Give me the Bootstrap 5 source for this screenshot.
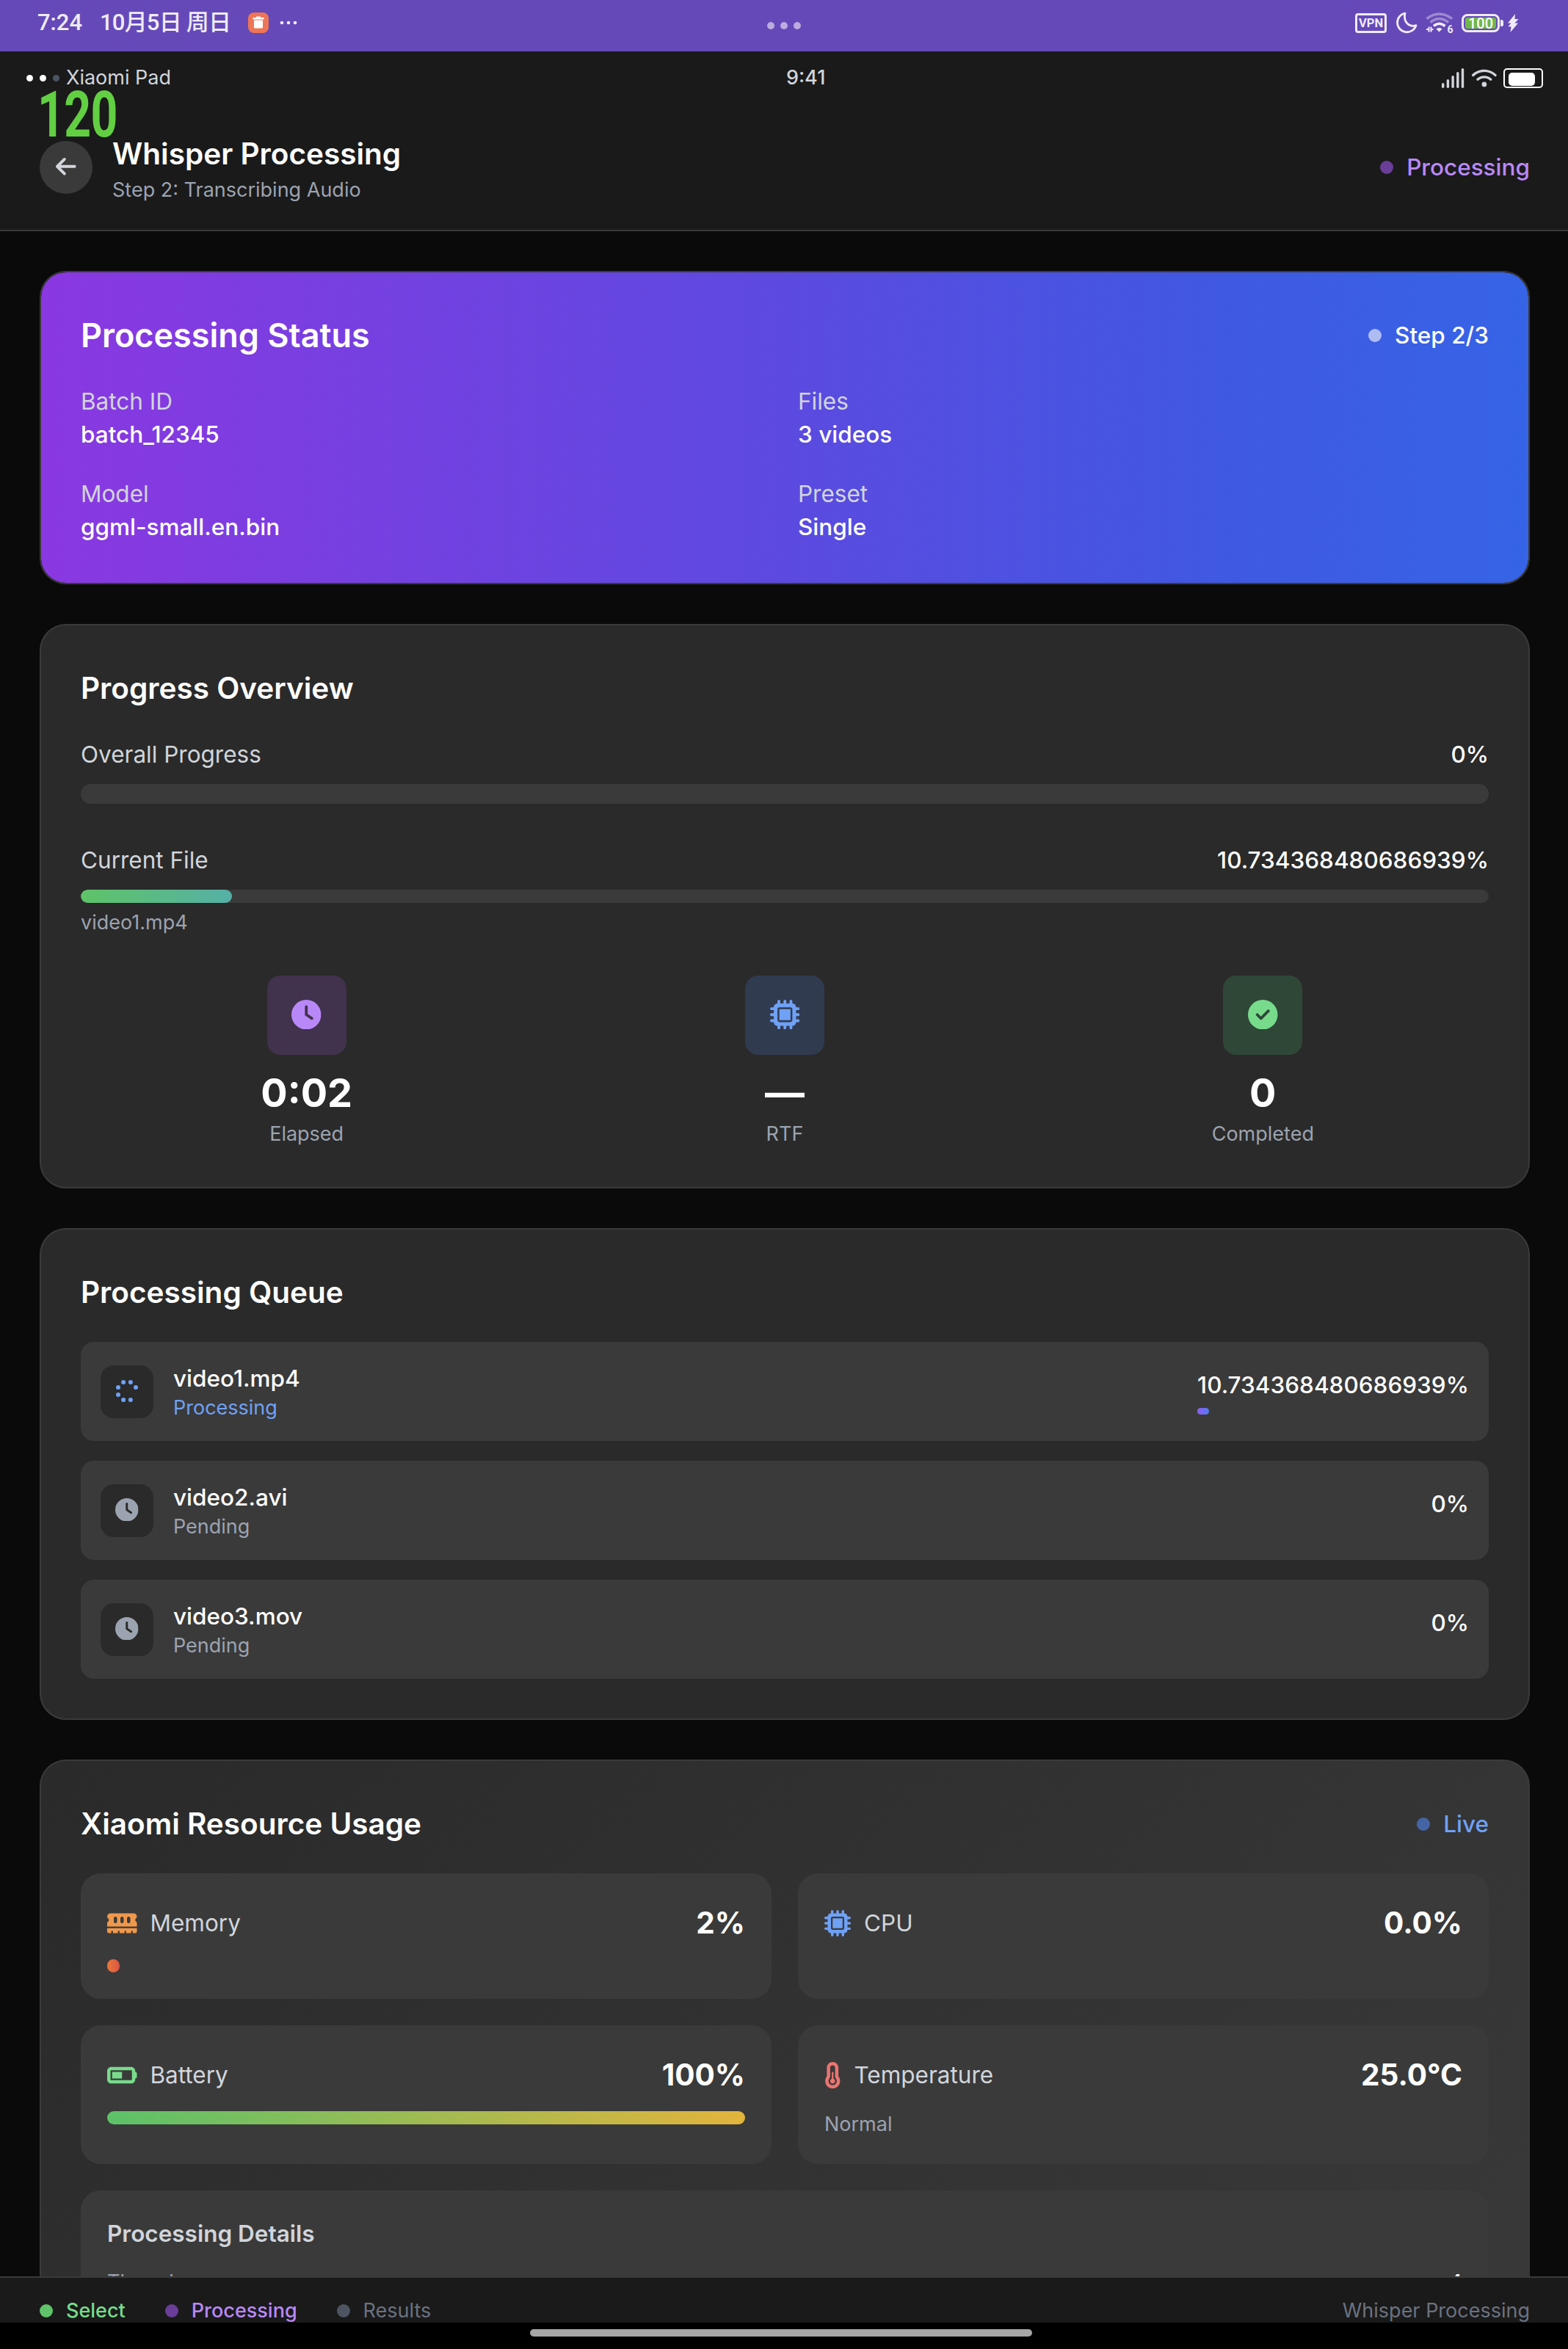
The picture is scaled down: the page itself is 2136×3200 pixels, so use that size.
<!DOCTYPE html>
<html lang="en" data-bs-theme="dark">
<head>
<meta charset="utf-8">
<meta name="viewport" content="width=device-width, initial-scale=1">
<title>Whisper Processing</title>
<link href="https://cdn.jsdelivr.net/npm/bootstrap@5.3.0/dist/css/bootstrap.min.css" rel="stylesheet">
<style>
:root{--ink:#fff;--soft:#d1d5db;--muted:#9ca3b0;--dim:#6b7280;--line:#3a3a3a;--panel:#2a2a2a;--purple:#b988f8;--blue:#6fa1f5;--green:#78db8c}
body{background:#0a0a0a;color:var(--ink);font-family:Inter,"Noto Sans CJK SC",sans-serif;font-size:31.5px;line-height:45px}
.screen{width:2136px;height:3200px;overflow:hidden}
.t-sm{font-size:27px;line-height:36px}
.t-lg{font-size:40.5px;line-height:63px}
.t-xl{font-size:45px;line-height:63px}
.t-2xl{font-size:54px;line-height:72px}
.w-500{font-weight:500}
.c-soft{color:var(--soft)}.c-muted{color:var(--muted)}.c-dim{color:var(--dim)}
.c-purple{color:var(--purple)}.c-blue{color:var(--blue)}.c-green{color:var(--green)}
.gap-9{gap:9px}.gap-18{gap:18px}.gap-36{gap:36px}.gap-54{gap:54px}
.head-gap{margin-bottom:36px}
.dot{width:18px;height:18px;border-radius:50%;flex:none}
svg{display:block;fill:currentColor;flex:none}
/* system bar */
.sysbar{height:70px;background:#6549b8;color:#efebf8;padding:0 66px 8px 51px;font-family:Roboto,"Noto Sans CJK SC",sans-serif;font-size:31px;line-height:40px}
.sys-date{margin-left:24px;letter-spacing:-.8px}
.sys-app{margin-left:24px}
.sys-dots{left:1045px;top:30px;gap:8px}
.sys-dots i{width:10px;height:10px;border-radius:50%;background:#bbacdf}
.vpn{width:43px;height:27px;border:3px solid #efebf8;border-radius:4px;font:700 16.500px/22px Roboto,sans-serif;text-align:center;display:flex;justify-content:center}
.sys-batt{width:52px;height:25px;border:3px solid #efebf8;border-radius:8px;padding:2px}
.sys-batt span{display:block;height:15px;border-radius:3px;background:#70b749;color:#fff;font:500 20px/16px Roboto,sans-serif;text-align:center}
/* application header */
.app-head{background:#1a1a1a;height:245px;border-bottom:2px solid var(--line)}
.app-status{height:72px;padding:0 34px 0 36px}
.mini{width:9px;height:9px;border-radius:50%;background:#fff}
.mini.off{background:#4b5563}
.batt{width:54px;height:27px;border:2px solid #fff;border-radius:5px;padding:4px 0 0 5px;margin-top:1px}
.batt i{display:block;width:36px;height:18px;border-radius:5px;background:#fff}
.app-title{padding:36px 52px 36px 54px}
.back{width:72px;height:72px;border-radius:50%;background:var(--line);color:var(--soft)}
/* frame-rate counter */
.fps{left:51px;top:125px;z-index:5;color:#62cf42;font:700 87px/62px Roboto,sans-serif;letter-spacing:-1px;transform:scaleX(.74);transform-origin:0 0}
/* panels */
main{flex:1 1 0;min-height:0;overflow:hidden;padding:54px 52px 0 54px}
.panel{border:2px solid var(--line);border-radius:36px;background:var(--panel);padding:54px;flex:none}
.panel-status{background:linear-gradient(90deg,#8a38e1,#5c4ae0 50%,#4058e2 79%,#3664e6);background-clip:padding-box}
.panel-res{background:linear-gradient(135deg,#2a2a2a,#3a3a3a);height:980px}
.two{display:grid;grid-template-columns:1fr 1fr;gap:36px}
.three{display:grid;grid-template-columns:1fr 1fr 1fr;gap:36px;margin-top:54px}
.track{background:var(--line);border-radius:14px;overflow:hidden}
.track i,.fill{display:block;border-radius:9px;height:100%}
.tile{width:108px;height:108px;border-radius:18px;padding-bottom:2px}
.stat-num{margin:16px 0 2px}
.job{background:var(--line);border-radius:18px;padding:27px;height:135px}
.job-ico{width:72px;height:72px;border-radius:18px;background:var(--panel);padding-bottom:2px}
.job-name{margin-left:27px}
.job-pct{margin-top:9px;height:9px}
.meter{background:var(--line);border-radius:27px;padding:36px}
.meter-bar{height:18px;margin-top:18px}
.details{background:var(--line);border-radius:27px;padding:36px;margin-top:36px;height:420px}
/* step footer */
.steps{height:63px;background:#1a1a1a;border-top:2px solid var(--line);padding:27px 52px 0 54px;overflow:hidden}
.home{height:36px;background:#000;padding:9px 0 0 722px}
.home i{display:block;width:684px;height:10px;border-radius:5px;background:#a6a6a6}
</style>
</head>
<body>
<svg width="0" height="0" class="position-absolute">
<symbol id="clock" viewBox="0 0 512 512"><path d="M256 0a256 256 0 1 1 0 512A256 256 0 1 1 256 0zM232 120V256c0 8 4 15.500 10.700 20l96 64c11 7.400 25.900 4.400 33.300-6.700s4.400-25.900-6.700-33.300L280 243.200V120c0-13.300-10.700-24-24-24s-24 10.700-24 24z"/></symbol>
<symbol id="chip" viewBox="0 0 512 512"><path d="M176 24c0-13.300-10.700-24-24-24s-24 10.700-24 24V64c-35.300 0-64 28.700-64 64H24c-13.300 0-24 10.700-24 24s10.700 24 24 24H64v56H24c-13.300 0-24 10.700-24 24s10.700 24 24 24H64v56H24c-13.300 0-24 10.700-24 24s10.700 24 24 24H64c0 35.300 28.700 64 64 64v40c0 13.300 10.700 24 24 24s24-10.700 24-24V448h56v40c0 13.300 10.700 24 24 24s24-10.700 24-24V448h56v40c0 13.300 10.700 24 24 24s24-10.700 24-24V448c35.300 0 64-28.700 64-64h40c13.300 0 24-10.700 24-24s-10.700-24-24-24H448V280h40c13.300 0 24-10.700 24-24s-10.700-24-24-24H448V176h40c13.300 0 24-10.700 24-24s-10.700-24-24-24H448c0-35.300-28.700-64-64-64V24c0-13.300-10.700-24-24-24s-24 10.700-24 24V64H280V24c0-13.300-10.700-24-24-24s-24 10.700-24 24V64H176V24zM160 128H352c17.700 0 32 14.300 32 32V352c0 17.700-14.300 32-32 32H160c-17.700 0-32-14.300-32-32V160c0-17.700 14.300-32 32-32zm192 32H160V352H352V160z"/></symbol>
</svg>
<div class="screen d-flex flex-column position-relative">

<div class="sysbar d-flex align-items-center position-relative">
  <span class="w-500">7:24</span>
  <span class="sys-date w-500">10月5日 周日</span>
  <svg class="sys-app" width="28" height="28" viewBox="0 0 28 28"><rect width="28" height="28" rx="8" fill="#ee7656"/><path fill="#fff" d="M11 5.500h6v1.500h4.500v2.500H6.500V7h4.500zM8 10.500h12V20q0 1.500-1.500 1.500h-9Q8 21.500 8 20z"/></svg>
  <svg width="24" height="6" viewBox="0 0 24 6" style="margin-left:15px"><circle cx="3" cy="3" r="2.300"/><circle cx="12" cy="3" r="2.300"/><circle cx="21" cy="3" r="2.300"/></svg>
  <div class="sys-dots position-absolute d-flex"><i></i><i></i><i></i></div>
  <div class="ms-auto d-flex align-items-center">
    <div class="vpn">VPN</div>
    <svg style="margin-left:12px" width="30" height="30" viewBox="0 0 30 30"><path d="M13 2A13 13 0 1 0 28 18.500Q21 21 16 16T13 2z" fill="none" stroke="currentColor" stroke-width="2.800" stroke-linejoin="round"/></svg>
    <svg style="margin-left:11px" width="39" height="30" viewBox="0 0 39 30"><g fill="none" stroke="currentColor" stroke-width="3.600"><path opacity=".4" d="M1.500 9.500Q18.500-3.500 36 9.500"/><path opacity=".4" d="M6.500 14.500Q18.500 4.500 31 14.500"/><path d="M11 19.500Q18.500 13 26.500 19.500"/></g><path d="M14.500 23.500Q18.500 20 22.500 23.500L18.500 27.500z"/><path d="M1 24h2.500M4.500 20.500v7M7.500 20.500v7M8.500 24h2" fill="none" stroke="currentColor" stroke-width="2"/><text x="29.500" y="28.500" font-size="14" font-weight="700" font-family="Roboto,sans-serif">6</text></svg>
    <div class="sys-batt" style="margin-left:10px"><span>100</span></div>
    <svg width="5" height="9" viewBox="0 0 5 9"><path d="M1 0h1.500Q5 0 5 2.500v4Q5 9 2.500 9H1z"/></svg>
    <svg style="margin-left:5px" width="17" height="25" viewBox="0 0 17 25"><path d="M11 0L1 12.500h4.500L1.500 17l4 .5L4.500 25 15 12.500h-4.500L15.500 7h-5z"/></svg>
  </div>
</div>

<div class="fps position-absolute">120</div>

<header class="app-head">
  <div class="app-status d-flex align-items-center justify-content-between t-sm c-soft">
    <div class="d-flex align-items-center gap-9"><span class="mini"></span><span class="mini"></span><span class="mini off"></span><span>Xiaomi Pad</span></div>
    <div class="w-500">9:41</div>
    <div class="d-flex align-items-center gap-9">
      <svg width="34" height="27" viewBox="0 0 34 27"><rect x="2" y="20" width="3.400" height="7" rx="1.700"/><rect x="8.700" y="15" width="3.400" height="12" rx="1.700"/><rect x="15.400" y="10" width="3.400" height="17" rx="1.700"/><rect x="22.100" y="5" width="3.400" height="22" rx="1.700"/><rect x="28.800" y="0" width="3.400" height="27" rx="1.700"/></svg>
      <svg width="33.750" height="27" viewBox="0 0 640 512"><path d="M54.200 202.900C123.200 136.700 216.800 96 320 96s196.800 40.700 265.800 106.900c12.800 12.200 33 11.800 45.200-.9s11.800-33-.9-45.200C549.700 79.500 440.400 32 320 32S90.300 79.500 9.800 156.700C-2.900 169-3.300 189.200 8.900 202s32.500 13.200 45.300 .9zM320 256c56.800 0 108.600 21.100 148.200 56c13.300 11.700 33.500 10.400 45.200-2.800s10.400-33.500-2.800-45.200C459.800 219.200 393 192 320 192s-139.800 27.200-190.500 72c-13.300 11.700-14.500 31.900-2.800 45.200s31.900 14.500 45.200 2.800c39.500-34.900 91.300-56 148.100-56zm64 160a64 64 0 1 0 -128 0 64 64 0 1 0 128 0z"/></svg>
      <span class="batt"><i></i></span>
    </div>
  </div>
  <div class="app-title d-flex align-items-center">
    <div class="back d-flex align-items-center justify-content-center"><svg width="27.600" height="31.500" viewBox="0 0 448 512" style="margin-bottom:2px"><path d="M9.400 233.400c-12.500 12.500-12.500 32.800 0 45.300l160 160c12.500 12.500 32.800 12.500 45.300 0s12.500-32.800 0-45.300L109.200 288 416 288c17.700 0 32-14.300 32-32s-14.300-32-32-32l-306.700 0L214.600 118.600c12.500-12.500 12.500-32.800 0-45.300s-32.800-12.500-45.300 0l-160 160z"/></svg></div>
    <div class="job-name"><div class="t-lg fw-semibold">Whisper Processing</div><div class="t-sm c-muted">Step 2: Transcribing Audio</div></div>
    <div class="ms-auto d-flex align-items-center gap-18 c-purple w-500"><span class="dot" style="background:#693d98"></span>Processing</div>
  </div>
</header>

<main class="d-flex flex-column gap-54">
  <section class="panel panel-status">
    <div class="head-gap d-flex align-items-center justify-content-between">
      <div class="t-xl fw-semibold">Processing Status</div>
      <div class="d-flex align-items-center gap-18 w-500"><span class="dot" style="background:#afbcf3"></span>Step 2/3</div>
    </div>
    <div class="two">
      <div><div class="c-soft">Batch ID</div><div class="w-500">batch_12345</div></div>
      <div><div class="c-soft">Files</div><div class="w-500">3 videos</div></div>
      <div><div class="c-soft">Model</div><div class="w-500">ggml-small.en.bin</div></div>
      <div><div class="c-soft">Preset</div><div class="w-500">Single</div></div>
    </div>
  </section>

  <section class="panel">
    <div class="head-gap t-lg fw-semibold">Progress Overview</div>
    <div class="d-flex justify-content-between"><span class="c-soft">Overall Progress</span><span class="w-500">0%</span></div>
    <div class="track" style="height:27px;margin:18px 0 54px"></div>
    <div class="d-flex justify-content-between"><span class="c-soft">Current File</span><span class="w-500">10.734368480686939%</span></div>
    <div class="track" style="height:18px;margin:18px 0 9px"><i style="width:10.734%;background:linear-gradient(90deg,#5fc367,#55b0a6)"></i></div>
    <div class="t-sm c-muted">video1.mp4</div>
    <div class="three text-center">
      <div><div class="tile mx-auto d-flex align-items-center justify-content-center c-purple" style="background:#41324d"><svg width="40.500" height="40.500"><use href="#clock"/></svg></div><div class="stat-num t-2xl fw-bold">0:02</div><div class="t-sm c-muted">Elapsed</div></div>
      <div><div class="tile mx-auto d-flex align-items-center justify-content-center c-blue" style="background:#313b50"><svg width="40.500" height="40.500"><use href="#chip"/></svg></div><div class="stat-num t-2xl fw-bold">—</div><div class="t-sm c-muted">RTF</div></div>
      <div><div class="tile mx-auto d-flex align-items-center justify-content-center c-green" style="background:#2f4737"><svg width="40.500" height="40.500" viewBox="0 0 512 512"><path d="M256 512A256 256 0 1 0 256 0a256 256 0 1 0 0 512zM369 209L241 337c-9.400 9.400-24.600 9.400-33.900 0l-64-64c-9.400-9.400-9.400-24.600 0-33.900s24.600-9.400 33.900 0l47 47L335 175c9.400-9.400 24.600-9.400 33.900 0s9.400 24.600 0 33.900z"/></svg></div><div class="stat-num t-2xl fw-bold">0</div><div class="t-sm c-muted">Completed</div></div>
    </div>
  </section>

  <section class="panel">
    <div class="head-gap t-lg fw-semibold">Processing Queue</div>
    <div class="d-flex flex-column" style="gap:27px">
      <div class="job d-flex align-items-center">
        <div class="job-ico d-flex align-items-center justify-content-center c-blue"><svg width="32" height="32" viewBox="-16 -16 32 32"><circle cx="-4.900" cy="-12" r="3"/><circle cx="4.900" cy="-12" r="3"/><circle cx="12" cy="-4.900" r="3"/><circle cx="4.900" cy="12" r="3"/><circle cx="-4.900" cy="12" r="3"/><circle cx="-12" cy="4.900" r="3"/><circle cx="-12" cy="-4.900" r="3"/></svg></div>
        <div class="job-name"><div class="w-500">video1.mp4</div><div class="t-sm c-blue">Processing</div></div>
        <div class="ms-auto w-500">10.734368480686939%<div class="job-pct"><span class="fill" style="width:16px;border-radius:4.500px;background:linear-gradient(90deg,#8f5cf0,#4f7df3)"></span></div></div>
      </div>
      <div class="job d-flex align-items-center">
        <div class="job-ico d-flex align-items-center justify-content-center c-muted"><svg width="31.500" height="31.500"><use href="#clock"/></svg></div>
        <div class="job-name"><div class="w-500">video2.avi</div><div class="t-sm c-muted">Pending</div></div>
        <div class="ms-auto w-500">0%<div class="job-pct"></div></div>
      </div>
      <div class="job d-flex align-items-center">
        <div class="job-ico d-flex align-items-center justify-content-center c-muted"><svg width="31.500" height="31.500"><use href="#clock"/></svg></div>
        <div class="job-name"><div class="w-500">video3.mov</div><div class="t-sm c-muted">Pending</div></div>
        <div class="ms-auto w-500">0%<div class="job-pct"></div></div>
      </div>
    </div>
  </section>

  <section class="panel panel-res">
    <div class="head-gap d-flex align-items-center justify-content-between">
      <div class="t-lg fw-semibold">Xiaomi Resource Usage</div>
      <div class="d-flex align-items-center gap-18 c-blue w-500"><span class="dot" style="background:#4464a6"></span>Live</div>
    </div>
    <div class="two">
      <div class="meter">
        <div class="d-flex align-items-center gap-18"><svg style="color:#ef984c" width="40.500" height="36" viewBox="0 0 576 512"><path d="M64 64C28.700 64 0 92.700 0 128v7.400c0 6.800 4.400 12.600 10.100 16.300C23.300 160.300 32 175.100 32 192s-8.700 31.700-21.900 40.300C4.400 236 0 241.800 0 248.600V320H576V248.600c0-6.800-4.400-12.600-10.100-16.300C552.700 223.700 544 208.900 544 192s8.700-31.700 21.900-40.300c5.700-3.700 10.100-9.500 10.100-16.300V128c0-35.300-28.700-64-64-64H64zM576 352H0v64c0 17.700 14.300 32 32 32H80V416c0-8.800 7.200-16 16-16s16 7.200 16 16v32h96V416c0-8.800 7.200-16 16-16s16 7.200 16 16v32h96V416c0-8.800 7.200-16 16-16s16 7.200 16 16v32h96V416c0-8.800 7.200-16 16-16s16 7.200 16 16v32h48c17.700 0 32-14.300 32-32V352zM192 160v64c0 17.700-14.300 32-32 32s-32-14.300-32-32V160c0-17.700 14.300-32 32-32s32 14.300 32 32zm128 0v64c0 17.700-14.300 32-32 32s-32-14.300-32-32V160c0-17.700 14.300-32 32-32s32 14.300 32 32zm128 0v64c0 17.700-14.300 32-32 32s-32-14.300-32-32V160c0-17.700 14.300-32 32-32s32 14.300 32 32z"/></svg><span class="c-soft">Memory</span><span class="ms-auto t-lg fw-bold">2%</span></div>
        <div class="meter-bar"><span class="fill" style="width:2%;background:linear-gradient(90deg,#ea7a38,#dc5347)"></span></div>
      </div>
      <div class="meter">
        <div class="d-flex align-items-center gap-18"><svg class="c-blue" width="36" height="36"><use href="#chip"/></svg><span class="c-soft">CPU</span><span class="ms-auto t-lg fw-bold">0.0%</span></div>
        <div class="meter-bar"></div>
      </div>
      <div class="meter">
        <div class="d-flex align-items-center gap-18"><svg class="c-green" width="40.500" height="36" viewBox="0 0 576 512"><path d="M464 160c8.800 0 16 7.200 16 16V336c0 8.800-7.200 16-16 16H80c-8.800 0-16-7.200-16-16V176c0-8.800 7.200-16 16-16H464zM80 96C35.800 96 0 131.800 0 176V336c0 44.200 35.800 80 80 80H464c44.200 0 80-35.800 80-80V320c17.700 0 32-14.300 32-32V224c0-17.700-14.300-32-32-32V176c0-44.200-35.800-80-80-80H80zm208 96H96V320H288V192z"/></svg><span class="c-soft">Battery</span><span class="ms-auto t-lg fw-bold">100%</span></div>
        <div class="meter-bar"><span class="fill" style="width:100%;background:linear-gradient(90deg,#5cc269,#e3b43c)"></span></div>
      </div>
      <div class="meter">
        <div class="d-flex align-items-center gap-18"><svg style="color:#e97571" width="22.500" height="36" viewBox="0 0 320 512"><path d="M160 64c-26.500 0-48 21.500-48 48V276.500c0 17.300-7.100 31.900-15.300 42.500C86.200 332.600 80 349.500 80 368c0 44.200 35.800 80 80 80s80-35.800 80-80c0-18.500-6.200-35.400-16.700-48.900c-8.200-10.600-15.300-25.200-15.300-42.500V112c0-26.500-21.500-48-48-48zM48 112C48 50.200 98.100 0 160 0s112 50.100 112 112V276.500c0 .1 .1 .3 .2 .6c.2 .6 .8 1.600 1.700 2.800c18.900 24.400 30.100 55 30.100 88.100c0 79.500-64.500 144-144 144S16 447.500 16 368c0-33.200 11.200-63.800 30.100-88.100c.9-1.200 1.500-2.200 1.700-2.800c.1-.3 .2-.5 .2-.6V112zM208 368c0 26.500-21.500 48-48 48s-48-21.500-48-48c0-20.900 13.400-38.700 32-45.300V208c0-8.800 7.200-16 16-16s16 7.200 16 16V322.700c18.600 6.600 32 24.400 32 45.300z"/></svg><span class="c-soft">Temperature</span><span class="ms-auto t-lg fw-bold">25.0°C</span></div>
        <div class="t-sm c-muted" style="margin-top:18px">Normal</div>
      </div>
    </div>
    <div class="details">
      <div class="fw-semibold c-soft" style="margin-bottom:26px">Processing Details</div>
      <div class="d-flex justify-content-between t-sm"><span class="c-muted">Threads</span><span class="w-500">4</span></div>
    </div>
  </section>
</main>

<footer class="steps d-flex align-items-start gap-54 t-sm flex-shrink-0">
  <div class="d-flex align-items-center gap-18 c-green w-500"><span class="dot" style="background:#5fc469"></span>Select</div>
  <div class="d-flex align-items-center gap-18 c-purple w-500"><span class="dot" style="background:#693d98"></span>Processing</div>
  <div class="d-flex align-items-center gap-18 c-dim"><span class="dot" style="background:#4d5563"></span>Results</div>
  <div class="ms-auto c-dim">Whisper Processing</div>
</footer>
<div class="home flex-shrink-0"><i></i></div>
</div>
<script src="https://cdn.jsdelivr.net/npm/bootstrap@5.3.0/dist/js/bootstrap.bundle.min.js"></script>
</body>
</html>
